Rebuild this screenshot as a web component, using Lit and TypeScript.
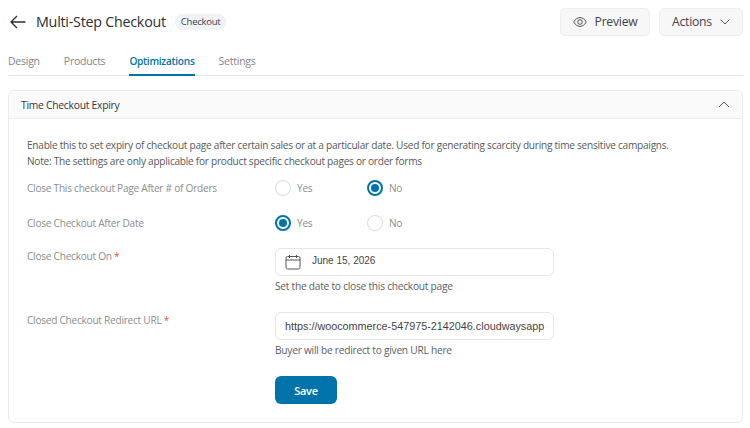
import { LitElement, html, css } from "lit";
import { customElement } from "lit/decorators.js";

@customElement("app-root")
export class AppRoot extends LitElement {
  static styles = css`
    :host { display: block; width: 750px; height: 428px; overflow: hidden; background: #fff; font-family: "Open Sans", "Noto Sans", sans-serif; letter-spacing: -0.25px; color: #333; box-sizing: border-box; padding: 8px 7px 0 8px; }
    * { box-sizing: border-box; }
    .top { display: flex; align-items: center; height: 27px; }
    .back { width: 16px; height: 14px; margin: 0 10px 0 2px; display: block; }
    h1 { margin: 0; font-size: 14.3px; font-weight: 500; color: #2a2f36; line-height: 27px; letter-spacing: -0.25px; }
    .badge { margin-left: 9px; height: 16px; padding: 0 6px; border-radius: 8px; background: #f0f2f4; font-size: 9.5px; line-height: 16px; color: #3c434a; font-weight: 500; }
    .acts { margin-left: auto; display: flex; gap: 9px; }
    .btn { height: 28px; border: 1px solid #eceef0; border-radius: 5px; background: #f7f7f8; display: flex; align-items: center; justify-content: center; font-size: 12.2px; color: #3c434a; font-weight: 500; }
    .prev { width: 90px; gap: 8px; }
    .act { width: 84px; gap: 8px; }
    .tabs { display: flex; gap: 24px; margin-top: 13px; height: 28px; border-bottom: 1px solid #e4e7ee; font-size: 10.5px; font-weight: 500; color: #82868c; }
    .tab { height: 27px; line-height: 26px; }
    .tab.on { color: #0073aa; border-bottom: 2px solid #0073aa; height: 28px; font-weight: 600; font-size: 10.1px; }
    .card { margin-top: 14px; height: 333px; border: 1px solid #e8eaee; border-radius: 6px; overflow: hidden; }
    .chead { height: 28px; background: #fafafa; border-bottom: 1px solid #e8eaee; display: flex; align-items: center; justify-content: space-between; padding: 0 12px; font-size: 10.3px; font-weight: 500; color: #32373c; }
    .cbody { padding: 18px 18px 0; font-size: 10.1px; }
    .desc { margin: 0; line-height: 16px; color: #555a60; white-space: nowrap; }
    .row { display: grid; grid-template-columns: 248px 1fr; color: #8a8d91; }
    .r1 { margin-top: 11px; height: 16px; align-items: center; }
    .r2 { margin-top: 19px; height: 16px; align-items: center; }
    .r3 { margin-top: 17px; }
    .r4 { margin-top: 19px; }
    .lbl { line-height: 16px; }
    .req { color: #e2574c; }
    .opts { display: flex; }
    .opt { width: 92px; display: flex; align-items: center; gap: 6px; }
    .radio { width: 16px; height: 16px; border-radius: 50%; border: 1px solid #d8dadd; background: #fff; }
    .radio.on { border: 2px solid #0073aa; display: flex; align-items: center; justify-content: center; }
    .radio.on::after { content: ""; width: 8px; height: 8px; border-radius: 50%; background: #0073aa; }
    .input { width: 279px; height: 28px; border: 1px solid #e4e6ea; border-radius: 6px; background: #fff; display: flex; align-items: center; font-family: "Liberation Sans", Arial, sans-serif; letter-spacing: 0; color: #444; overflow: hidden; }
    .date { padding-left: 9px; gap: 11px; font-size: 10px; padding-bottom: 3px; }
    .date svg { margin-top: 3px; }
    .url { font-size: 10.8px; padding: 0 9px; white-space: nowrap; }
    .help { margin-top: 3px; line-height: 14px; font-size: 10.2px; color: #5c6066; }
    .save { margin: 19px 0 0 248px; width: 62px; height: 28px; border-radius: 6px; background: #0073aa; color: #fff; font-size: 11px; font-weight: 600; display: flex; align-items: center; justify-content: center; }
  `;

  render() {
    return html`
      <div class="top">
        <svg class="back" viewBox="0 0 16 14" fill="none" stroke="#2a2f36" stroke-width="1.3"><path d="M15.5 7H1M7 1L1 7l6 6"/></svg>
        <h1>Multi-Step Checkout</h1>
        <span class="badge">Checkout</span>
        <div class="acts">
          <div class="btn prev">
            <svg width="14" height="10" viewBox="0 0 14 10" fill="none" stroke="#3c434a" stroke-width="0.9"><path d="M.7 5C2.5 2 4.6.6 7 .6S11.5 2 13.3 5C11.5 8 9.4 9.4 7 9.4S2.5 8 .7 5z"/><circle cx="7" cy="5" r="2.3"/></svg>
            Preview
          </div>
          <div class="btn act">
            Actions
            <svg width="10" height="6" viewBox="0 0 10 6" fill="none" stroke="#3c434a" stroke-width="0.9"><path d="M.7.7L5 5l4.300-4.300"/></svg>
          </div>
        </div>
      </div>
      <div class="tabs">
        <div class="tab">Design</div>
        <div class="tab">Products</div>
        <div class="tab on">Optimizations</div>
        <div class="tab">Settings</div>
      </div>
      <div class="card">
        <div class="chead">
          Time Checkout Expiry
          <svg width="12" height="7" viewBox="0 0 12 7" fill="none" stroke="#4a4f55" stroke-width="1"><path d="M1 6l5-5 5 5"/></svg>
        </div>
        <div class="cbody">
          <p class="desc">Enable this to set expiry of checkout page after certain sales or at a particular date. Used for generating scarcity during time sensitive campaigns.<br />Note: The settings are only applicable for product specific checkout pages or order forms</p>
          <div class="row r1">
            <div class="lbl">Close This checkout Page After # of Orders</div>
            <div class="opts">
              <div class="opt"><span class="radio"></span>Yes</div>
              <div class="opt"><span class="radio on"></span>No</div>
            </div>
          </div>
          <div class="row r2">
            <div class="lbl">Close Checkout After Date</div>
            <div class="opts">
              <div class="opt"><span class="radio on"></span>Yes</div>
              <div class="opt"><span class="radio"></span>No</div>
            </div>
          </div>
          <div class="row r3">
            <div class="lbl">Close Checkout On <span class="req">*</span></div>
            <div>
              <div class="input date">
                <svg width="16" height="16" viewBox="0 0 16 16" fill="none" stroke="#555" stroke-width="1"><rect x="1" y="2.5" width="14" height="12.5" rx="1.5"/><path d="M1 6h14M4.5 1v3M11.5 1v3"/></svg>
                June 15, 2026
              </div>
              <div class="help">Set the date to close this checkout page</div>
            </div>
          </div>
          <div class="row r4">
            <div class="lbl">Closed Checkout Redirect URL <span class="req">*</span></div>
            <div>
              <div class="input url">https://woocommerce-547975-2142046.cloudwaysapp</div>
              <div class="help">Buyer will be redirect to given URL here</div>
            </div>
          </div>
          <div class="save">Save</div>
        </div>
      </div>
    `;
  }
}
